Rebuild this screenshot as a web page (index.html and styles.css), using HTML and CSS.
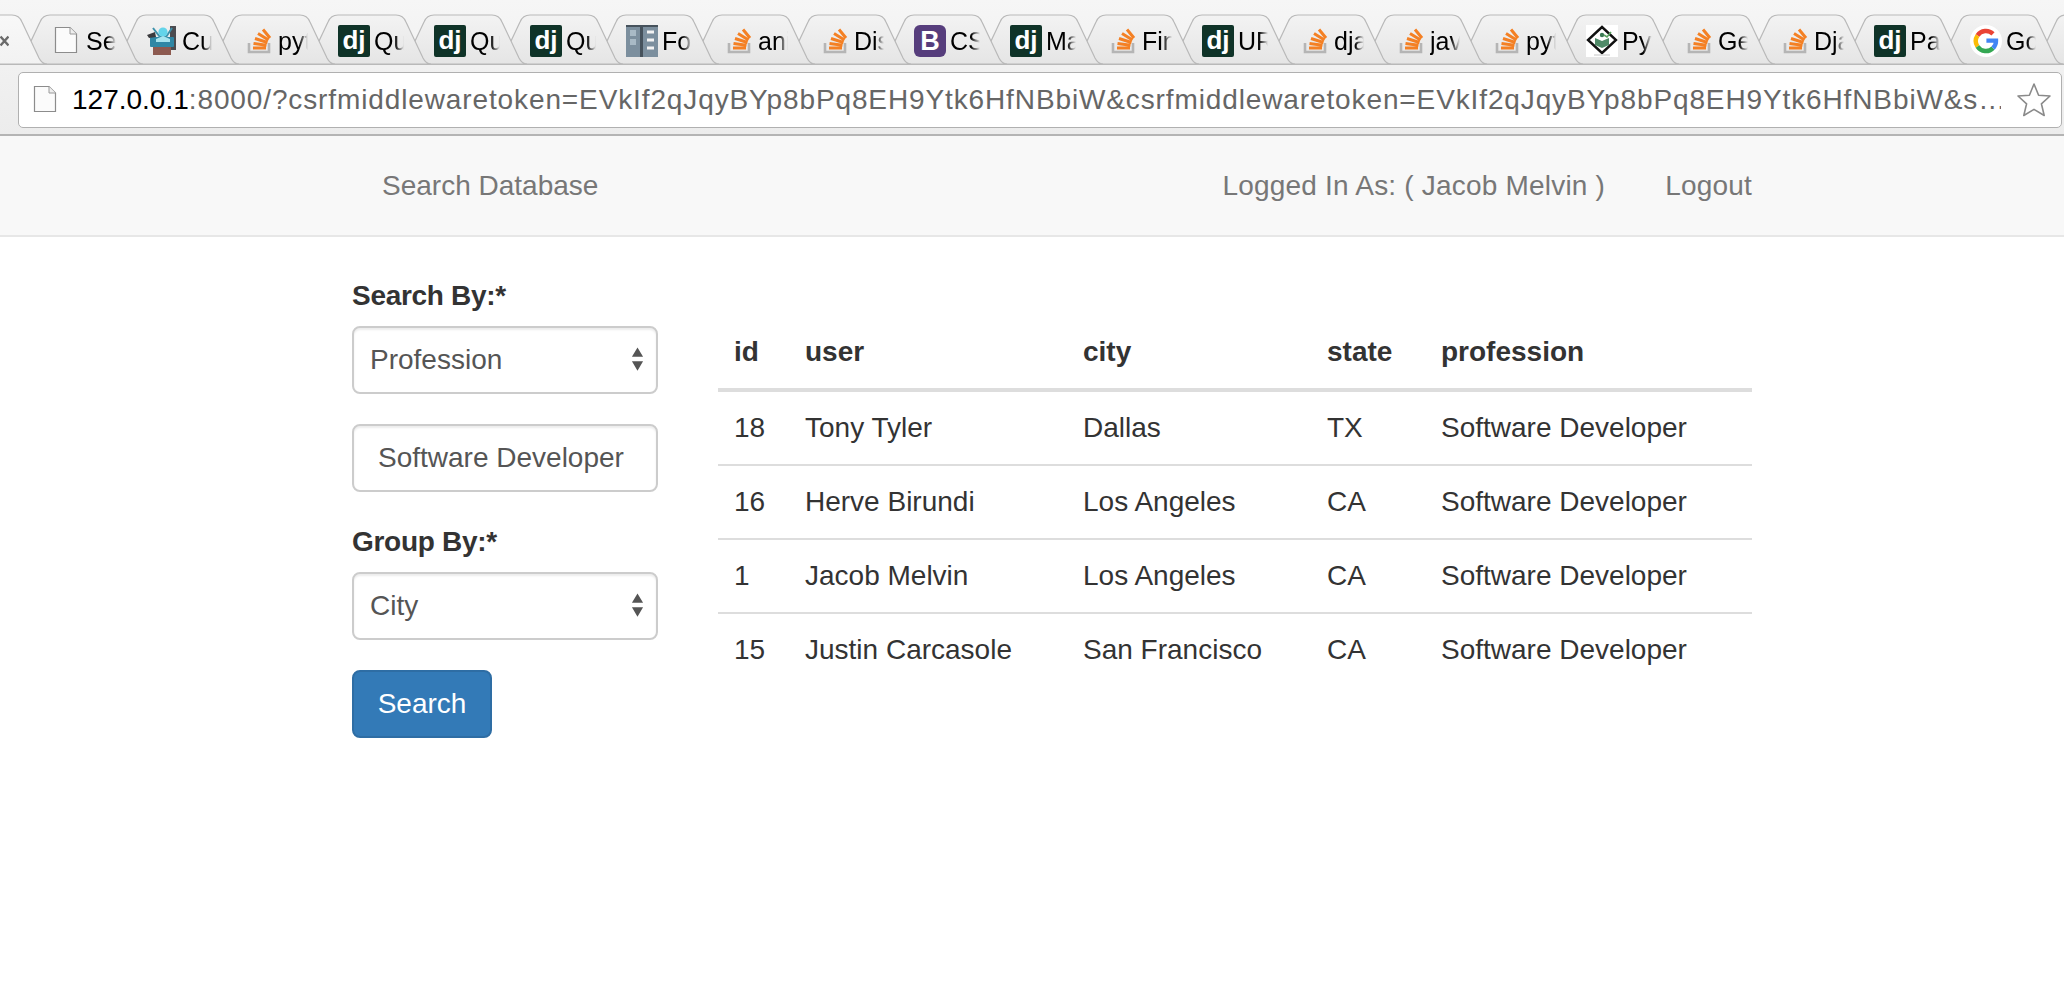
FILE: index.html
```html
<!DOCTYPE html>
<html lang="en">
<head>
<meta charset="utf-8">
<title>Search Database</title>
<link rel="stylesheet" href="styles.css">
</head>
<body>
<svg class="defs" aria-hidden="true">
  <defs>
    <linearGradient id="tabfill" x1="0" y1="0" x2="0" y2="1"><stop offset="0" stop-color="#f3f3f3"/><stop offset="1" stop-color="#e5e5e5"/></linearGradient>
    <linearGradient id="activefill" x1="0" y1="0" x2="0" y2="1"><stop offset="0" stop-color="#f8f8f8"/><stop offset="1" stop-color="#f2f2f2"/></linearGradient>
    <symbol id="shape" viewBox="0 0 130 52"><path d="M0 50C4 50 6 48 7 44L24 8C26 3 29 1 34 1H92C97 1 100 3 102 8L119 44C121 48 123 50 127 50Z"/></symbol>
    <symbol id="doc" viewBox="0 0 32 32"><path d="M5.5 2.5H20L26.5 9V27.5H5.5Z" fill="#fbfbfb" stroke="#8c8c8c" stroke-width="1.2"/><path d="M20 2.5V9H26.5" fill="#eee" stroke="#9a9a9a" stroke-width="1"/></symbol>
    <symbol id="so" viewBox="0 0 32 32">
      <path d="M7 18V27H27V18" fill="none" stroke="#b5b5b5" stroke-width="2.6"/>
      <path d="M11 23H24M11.5 18.5L24.5 20.2M13 13.5L25.5 17.5M16 8.5L26.5 15M21 4.5L28 13" fill="none" stroke="#f48024" stroke-width="3"/>
    </symbol>
    <symbol id="dj" viewBox="0 0 32 32"><rect width="32" height="32" rx="2" fill="#0f3328"/><text x="16" y="24" text-anchor="middle" class="dj-text">dj</text></symbol>
    <symbol id="bs" viewBox="0 0 32 32"><rect width="32" height="32" rx="6" fill="#563d7c"/><text x="16" y="25" text-anchor="middle" class="bs-text">B</text></symbol>
    <symbol id="type" viewBox="0 0 32 32">
      <rect x="24" y="1" width="6" height="24" fill="#4c4c50"/>
      <path d="M7 3L14 12H20L26 3" fill="none" stroke="#3d91ab" stroke-width="2"/>
      <circle cx="17" cy="7" r="4.6" fill="#63d4ea"/>
      <rect x="4" y="12" width="24" height="10" rx="1" fill="#2f87a5"/>
      <path d="M10 14L17 11L24 14V17H10Z" fill="#a7e4ef"/>
      <rect x="7" y="22" width="18" height="8" fill="#8d5a50"/>
      <path d="M1 10L9 7L10 12L3 13Z" fill="#3a3a3e"/>
    </symbol>
    <symbol id="panel" viewBox="0 0 32 32">
      <rect width="32" height="32" fill="#7c8f9e"/>
      <rect x="14" y="0" width="3" height="32" fill="#46525c"/>
      <rect x="0" y="0" width="32" height="2" fill="#46525c"/>
      <rect x="4" y="5" width="6" height="6" fill="#a9bac6"/>
      <rect x="4" y="14" width="6" height="6" fill="#a9bac6"/>
      <path d="M21 7H28M21 15H28M21 23H28" stroke="#f3f3f3" stroke-width="3"/>
    </symbol>
    <symbol id="tp" viewBox="0 0 32 32">
      <rect width="32" height="32" fill="#fff"/>
      <path d="M16 2L30 15L16 28L2 15Z" fill="#fff" stroke="#111" stroke-width="2.4"/>
      <circle cx="16" cy="10" r="2.2" fill="#3b7a55"/>
      <path d="M9 13L16 16L23 13V20L16 23L9 20Z" fill="#4f8a68"/>
      <path d="M18 10L21 12L25 7" fill="none" stroke="#58a05f" stroke-width="1.6"/>
      <path d="M8 30H24" stroke="#d8d8d8" stroke-width="1.5"/>
    </symbol>
    <symbol id="google" viewBox="0 0 32 32">
      <circle cx="16" cy="16" r="16" fill="#fff"/>
      <path d="M7.5 10.5A10 10 0 0 1 23 8.9" fill="none" stroke="#ea4335" stroke-width="4.4"/>
      <path d="M7.5 10.5A10 10 0 0 0 7.5 21.5" fill="none" stroke="#fbbc05" stroke-width="4.4"/>
      <path d="M7.5 21.5A10 10 0 0 0 23 23.1" fill="none" stroke="#34a853" stroke-width="4.4"/>
      <path d="M16.4 15.6H26A10 10 0 0 1 23 23.1" fill="none" stroke="#4285f4" stroke-width="4.4"/>
    </symbol>
    <symbol id="updown" viewBox="0 0 14 26"><path d="M7 0L13 10H1ZM1 15H13L7 25Z" fill="#555"/></symbol>
  </defs>
</svg>

<header class="browser">
  <div class="strip">
    <div class="tab tab-active"><svg class="tab-shape"><use href="#shape"/></svg>
      <svg class="close" viewBox="0 0 9 12"><path d="M.5 1.5L8.5 10.5M8.5 1.5L.5 10.5" stroke="#6b6b6b" stroke-width="2.4"/></svg></div>
    <div class="tab"><svg class="tab-shape"><use href="#shape"/></svg><svg class="fav"><use href="#doc"/></svg><span class="tab-label">Se</span></div>
    <div class="tab"><svg class="tab-shape"><use href="#shape"/></svg><svg class="fav"><use href="#type"/></svg><span class="tab-label">Cu</span></div>
    <div class="tab"><svg class="tab-shape"><use href="#shape"/></svg><svg class="fav"><use href="#so"/></svg><span class="tab-label">pyt</span></div>
    <div class="tab"><svg class="tab-shape"><use href="#shape"/></svg><svg class="fav"><use href="#dj"/></svg><span class="tab-label">Qu</span></div>
    <div class="tab"><svg class="tab-shape"><use href="#shape"/></svg><svg class="fav"><use href="#dj"/></svg><span class="tab-label">Qu</span></div>
    <div class="tab"><svg class="tab-shape"><use href="#shape"/></svg><svg class="fav"><use href="#dj"/></svg><span class="tab-label">Qu</span></div>
    <div class="tab"><svg class="tab-shape"><use href="#shape"/></svg><svg class="fav"><use href="#panel"/></svg><span class="tab-label">For</span></div>
    <div class="tab"><svg class="tab-shape"><use href="#shape"/></svg><svg class="fav"><use href="#so"/></svg><span class="tab-label">ani</span></div>
    <div class="tab"><svg class="tab-shape"><use href="#shape"/></svg><svg class="fav"><use href="#so"/></svg><span class="tab-label">Dis</span></div>
    <div class="tab"><svg class="tab-shape"><use href="#shape"/></svg><svg class="fav"><use href="#bs"/></svg><span class="tab-label">CS</span></div>
    <div class="tab"><svg class="tab-shape"><use href="#shape"/></svg><svg class="fav"><use href="#dj"/></svg><span class="tab-label">Ma</span></div>
    <div class="tab"><svg class="tab-shape"><use href="#shape"/></svg><svg class="fav"><use href="#so"/></svg><span class="tab-label">Fin</span></div>
    <div class="tab"><svg class="tab-shape"><use href="#shape"/></svg><svg class="fav"><use href="#dj"/></svg><span class="tab-label">UR</span></div>
    <div class="tab"><svg class="tab-shape"><use href="#shape"/></svg><svg class="fav"><use href="#so"/></svg><span class="tab-label">dja</span></div>
    <div class="tab"><svg class="tab-shape"><use href="#shape"/></svg><svg class="fav"><use href="#so"/></svg><span class="tab-label">jav</span></div>
    <div class="tab"><svg class="tab-shape"><use href="#shape"/></svg><svg class="fav"><use href="#so"/></svg><span class="tab-label">pyt</span></div>
    <div class="tab"><svg class="tab-shape"><use href="#shape"/></svg><svg class="fav"><use href="#tp"/></svg><span class="tab-label">Pyt</span></div>
    <div class="tab"><svg class="tab-shape"><use href="#shape"/></svg><svg class="fav"><use href="#so"/></svg><span class="tab-label">Ge</span></div>
    <div class="tab"><svg class="tab-shape"><use href="#shape"/></svg><svg class="fav"><use href="#so"/></svg><span class="tab-label">Dja</span></div>
    <div class="tab"><svg class="tab-shape"><use href="#shape"/></svg><svg class="fav"><use href="#dj"/></svg><span class="tab-label">Pa</span></div>
    <div class="tab"><svg class="tab-shape"><use href="#shape"/></svg><svg class="fav"><use href="#google"/></svg><span class="tab-label">Go</span></div>
    <div class="tab"><svg class="tab-shape"><use href="#shape"/></svg></div>
  </div>
  <div class="toolbar">
    <div class="omnibox">
      <svg class="omni-doc"><use href="#doc"/></svg>
      <div class="url"><span class="url-host">127.0.0.1</span>:8000/?csrfmiddlewaretoken=EVkIf2qJqyBYp8bPq8EH9Ytk6HfNBbiW&amp;csrfmiddlewaretoken=EVkIf2qJqyBYp8bPq8EH9Ytk6HfNBbiW&amp;s…</div>
      <svg class="star" viewBox="0 0 34 36"><path d="M17 2L21.6 13.2L33 14L24.4 21.8L27.2 33.5L17 27.4L6.8 33.5L9.6 21.8L1 14L12.4 13.2Z" fill="#fff" stroke="#8a8a8a" stroke-width="1.6" stroke-linejoin="round"/></svg>
    </div>
  </div>
</header>

<nav class="navbar">
  <a class="nav-link" href="#">Search Database</a>
  <div class="nav-right">
    <a class="nav-link" href="#">Logged In As: ( Jacob Melvin )</a>
    <a class="nav-link" href="#">Logout</a>
  </div>
</nav>

<main class="main">
  <form class="sidebar">
    <div class="group">
      <label class="label" for="by">Search By:*</label>
      <div class="select-wrap">
        <select class="control select" id="by"><option>Profession</option></select>
        <svg class="updown"><use href="#updown"/></svg>
      </div>
    </div>
    <div class="group">
      <input class="control input" type="text" value="Software Developer">
    </div>
    <div class="group">
      <label class="label" for="group">Group By:*</label>
      <div class="select-wrap">
        <select class="control select" id="group"><option>City</option></select>
        <svg class="updown"><use href="#updown"/></svg>
      </div>
    </div>
    <button class="btn" type="button">Search</button>
  </form>

  <table class="results">
    <colgroup><col class="c-id"><col class="c-user"><col class="c-city"><col class="c-state"><col class="c-prof"></colgroup>
    <thead><tr><th>id</th><th>user</th><th>city</th><th>state</th><th>profession</th></tr></thead>
    <tbody>
      <tr><td>18</td><td>Tony Tyler</td><td>Dallas</td><td>TX</td><td>Software Developer</td></tr>
      <tr><td>16</td><td>Herve Birundi</td><td>Los Angeles</td><td>CA</td><td>Software Developer</td></tr>
      <tr><td>1</td><td>Jacob Melvin</td><td>Los Angeles</td><td>CA</td><td>Software Developer</td></tr>
      <tr><td>15</td><td>Justin Carcasole</td><td>San Francisco</td><td>CA</td><td>Software Developer</td></tr>
    </tbody>
  </table>
</main>
</body>
</html>
```

FILE: styles.css
```css
* { box-sizing: border-box; }
html, body { margin: 0; padding: 0; height: 100%; overflow: hidden; }
body { background: #fff; color: #333; font-family: "Liberation Sans", Arial, sans-serif; font-size: 28px; line-height: 40px; }
.defs { position: absolute; width: 0; height: 0; }

/* browser chrome */
.browser { height: 136px; overflow: hidden; background: linear-gradient(#f6f6f6, #ececec); border-bottom: 2px solid #b4b4b4; }
.strip { display: flex; height: 65px; margin-left: -60px; border-bottom: 1px solid #b9b9b9; }
.tab { position: relative; flex: 0 0 96px; height: 64px; padding: 25px 0 0 14px; display: flex; }
.tab-shape { position: absolute; left: -20px; top: 14px; width: 130px; height: 52px; fill: url(#tabfill); stroke: #b9b9b9; stroke-width: 1.2; }
.tab-active .tab-shape { fill: url(#activefill); }
.close { position: absolute; left: 60px; top: 35px; width: 9px; height: 12px; }
.fav { position: relative; flex: none; width: 32px; height: 32px; }
.tab-label { position: relative; width: 30px; margin-left: 4px; overflow: hidden; white-space: nowrap; color: #000; font-size: 25px; line-height: 32px; -webkit-mask-image: linear-gradient(90deg, #000 70%, transparent 100%); mask-image: linear-gradient(90deg, #000 70%, transparent 100%); }
.tab:nth-child(1) { z-index: 40; } .tab:nth-child(2) { z-index: 39; } .tab:nth-child(3) { z-index: 38; }
.tab:nth-child(4) { z-index: 37; } .tab:nth-child(5) { z-index: 36; } .tab:nth-child(6) { z-index: 35; }
.tab:nth-child(7) { z-index: 34; } .tab:nth-child(8) { z-index: 33; } .tab:nth-child(9) { z-index: 32; }
.tab:nth-child(10) { z-index: 31; } .tab:nth-child(11) { z-index: 30; } .tab:nth-child(12) { z-index: 29; }
.tab:nth-child(13) { z-index: 28; } .tab:nth-child(14) { z-index: 27; } .tab:nth-child(15) { z-index: 26; }
.tab:nth-child(16) { z-index: 25; } .tab:nth-child(17) { z-index: 24; } .tab:nth-child(18) { z-index: 23; }
.tab:nth-child(19) { z-index: 22; } .tab:nth-child(20) { z-index: 21; } .tab:nth-child(21) { z-index: 20; }
.tab:nth-child(22) { z-index: 19; } .tab:nth-child(23) { z-index: 18; }
.dj-text { font: bold 26px "Liberation Sans", sans-serif; fill: #fff; }
.bs-text { font: bold 27px "Liberation Sans", sans-serif; fill: #fff; }

.toolbar { padding: 7px 2px 0 18px; }
.omnibox { display: flex; align-items: center; height: 56px; background: #fff; border: 1px solid #b0b0b0; border-radius: 5px; }
.omni-doc { flex: none; width: 32px; height: 32px; margin-left: 10px; }
.url { flex: 1; min-width: 0; margin-left: 11px; white-space: nowrap; overflow: hidden; color: #666; font-size: 28px; line-height: 40px; letter-spacing: .88px; }
.url-host { color: #000; letter-spacing: 0; }
.star { flex: none; width: 34px; height: 36px; margin: 0 10px 0 16px; }

/* navbar */
.navbar { display: flex; justify-content: space-between; align-items: center; height: 101px; padding: 0 282px 0 352px; background: #f8f8f8; border-bottom: 2px solid #e7e7e7; }
.nav-link { padding: 0 30px; color: #777; text-decoration: none; }
.nav-right { display: flex; letter-spacing: .2px; }

/* content */
.main { display: flex; align-items: flex-start; gap: 60px; padding: 39px 312px 0 352px; }
.sidebar { flex: 0 0 306px; }
.group { margin-bottom: 30px; }
.label { display: block; margin-bottom: 10px; font-weight: bold; letter-spacing: -.3px; }
.select-wrap { position: relative; }
.control { display: block; width: 100%; height: 68px; background: #fff; border: 2px solid #ccc; border-radius: 8px; color: #555; font: 28px/40px "Liberation Sans", Arial, sans-serif; box-shadow: inset 0 2px 2px rgba(0,0,0,.075); outline: none; }
.select { padding: 0 40px 0 16px; appearance: none; -webkit-appearance: none; }
.input { padding: 0 24px; }
.updown { position: absolute; right: 14px; top: 21px; width: 13px; height: 25px; }
.btn { display: block; width: 140px; height: 68px; padding: 0; background: #337ab7; border: 2px solid #2e6da4; border-radius: 8px; color: #fff; font: 28px/40px "Liberation Sans", Arial, sans-serif; }

.results { flex: 1; margin-top: 40px; border-collapse: collapse; table-layout: fixed; }
.c-id { width: 71px; } .c-user { width: 278px; } .c-city { width: 244px; } .c-state { width: 114px; }
.results th, .results td { padding: 16px; text-align: left; }
.results th { border-bottom: 4px solid #ddd; font-weight: bold; }
.results tbody tr + tr td { border-top: 2px solid #ddd; }
```
